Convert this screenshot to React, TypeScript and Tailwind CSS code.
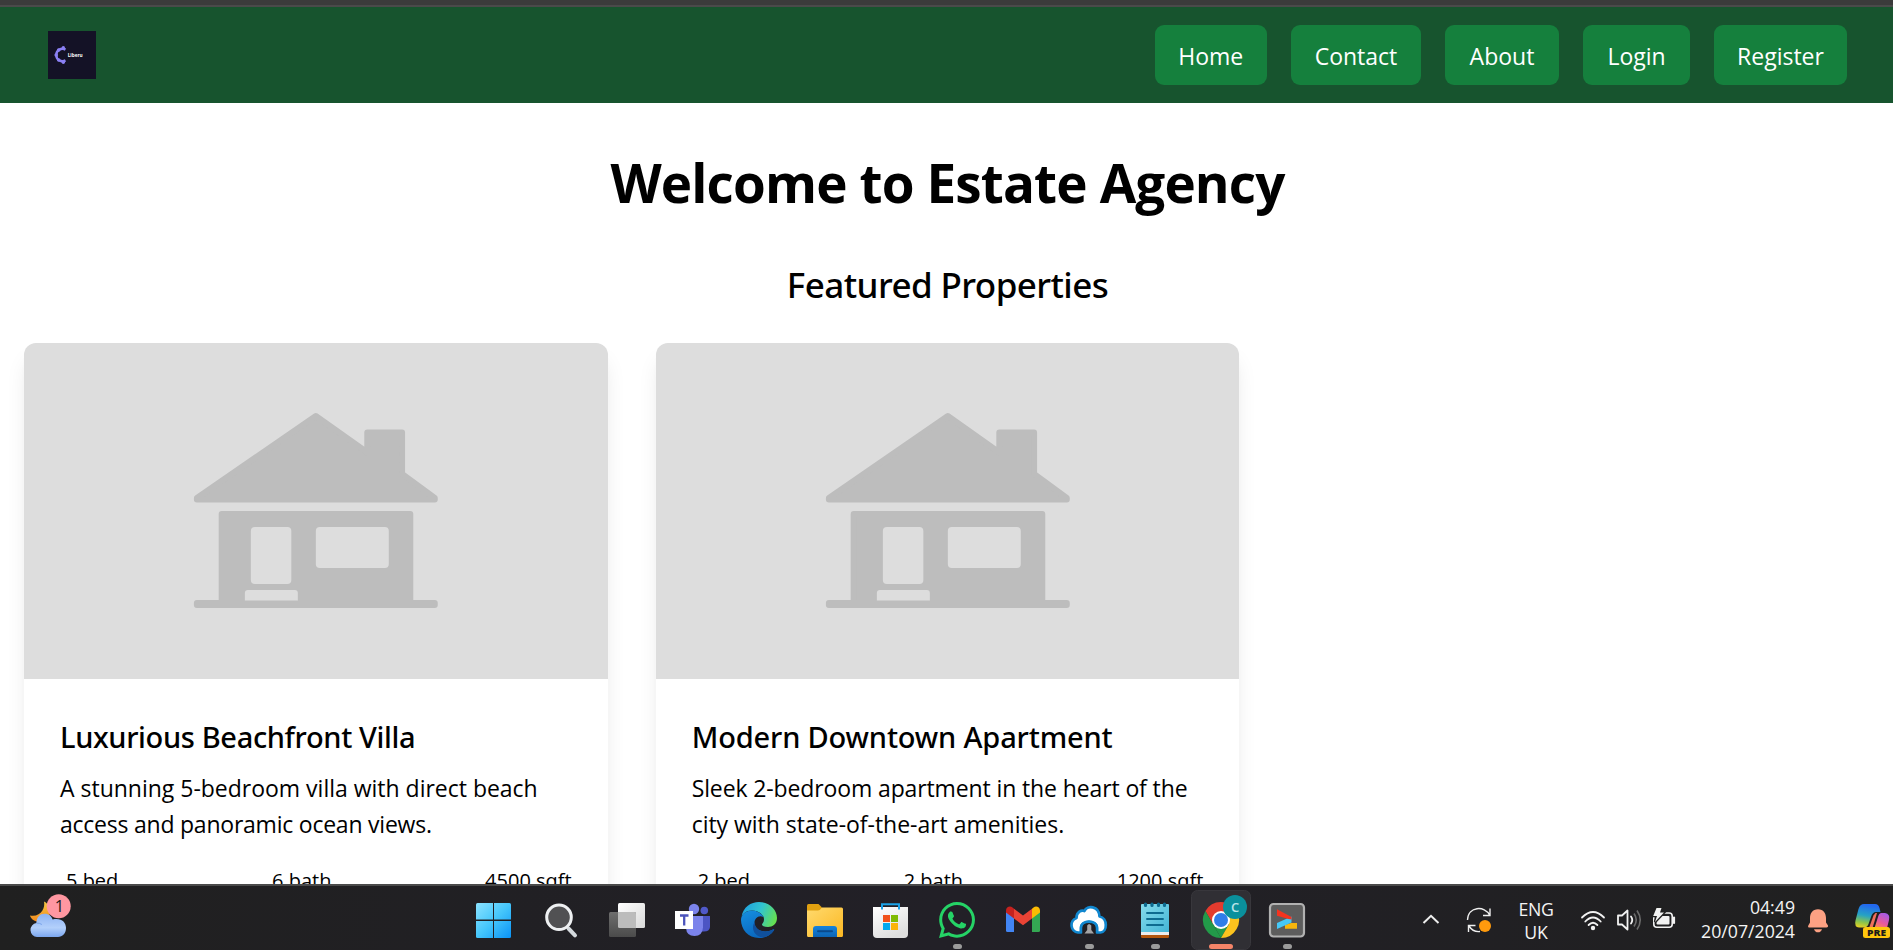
import React, { type ReactNode } from "react";
import { FaWhatsapp } from "react-icons/fa";

const navLinks = [
  { label: "Home", width: "w-[112.5px]" },
  { label: "Contact", width: "w-[130px]" },
  { label: "About", width: "w-[114px]" },
  { label: "Login", width: "w-[107px]" },
  { label: "Register", width: "w-[133px]" },
];

const properties = [
  {
    title: "Luxurious Beachfront Villa",
    titleTracking: "tracking-[-0.35px]",
    lines: [
      { text: "A stunning 5-bedroom villa with direct beach", tracking: "tracking-[-0.01px]" },
      { text: "access and panoramic ocean views.", tracking: "tracking-[-0.23px]" },
    ],
    stats: ["5 bed", "6 bath", "4500 sqft"],
  },
  {
    title: "Modern Downtown Apartment",
    titleTracking: "tracking-[-0.15px]",
    lines: [
      { text: "Sleek 2-bedroom apartment in the heart of the", tracking: "tracking-[-0.12px]" },
      { text: "city with state-of-the-art amenities.", tracking: "tracking-[-0.03px]" },
    ],
    stats: ["2 bed", "2 bath", "1200 sqft"],
  },
];

function Logo() {
  return (
    <svg className="size-12 shrink-0" viewBox="0 0 48 48">
      <rect width="48" height="48" fill="#141226" />
      <path d="M17.5 18.6A6.2 6.2 0 1 0 17.5 29.4" fill="none" stroke="#8b80f4" strokeWidth="2.4" />
      <g fill="#8b80f4">
        <circle cx="15.3" cy="16.8" r="1.7" />
        <circle cx="10.7" cy="19" r="1.8" />
        <circle cx="8.2" cy="24" r="1.8" />
        <circle cx="10.7" cy="29" r="1.8" />
        <circle cx="15.3" cy="31.3" r="1.7" />
      </g>
      <text x="19.7" y="25.8" fontSize="4.800" fontWeight="700" fill="#fff" textLength="15" lengthAdjust="spacingAndGlyphs" fontFamily="Open Sans, sans-serif">
        Liberu
      </text>
    </svg>
  );
}

function HouseImage() {
  return (
    <svg className="block h-[336px] w-full bg-[#dddddd]" viewBox="0 0 584 336" preserveAspectRatio="none">
      <g fill="#bdbdbd" stroke="#bdbdbd" strokeWidth="6" strokeLinejoin="round">
        <path d="M292 73L173 155V156.500H411V155L378.300 131V89.500H343.500V109.500Z" />
        <path d="M197.800 171H386.500V262H197.800Z" />
        <path d="M173 260H411V262H173Z" />
      </g>
      <g fill="#dddddd">
        <rect x="227" y="184" width="40.500" height="57" rx="4" />
        <rect x="292" y="184" width="73" height="41" rx="4" />
        <path d="M221 257.500V250q0-3 3-3H271q3 0 3 3V257.500Z" />
      </g>
    </svg>
  );
}

function Cell({ children }: { children: ReactNode }) {
  return (
    <svg className="h-16 w-[66px] shrink-0" viewBox="0 0 66 64">
      {children}
    </svg>
  );
}

function Running() {
  return <rect x="29" y="58" width="9" height="5" rx="2.500" fill="#9b9b9b" />;
}

function Weather() {
  return (
    <svg className="ml-6 h-16 w-12 shrink-0" viewBox="0 0 48 64">
      <defs>
        <linearGradient id="moon" x1="0" y1="0" x2="0" y2="1">
          <stop offset="0" stopColor="#f6c844" />
          <stop offset="1" stopColor="#f28a1c" />
        </linearGradient>
        <linearGradient id="cloud" x1="0" y1="0" x2="0" y2="1">
          <stop offset="0" stopColor="#8cb2f3" />
          <stop offset="0.600" stopColor="#b3d0fb" />
          <stop offset="1" stopColor="#7ba6ee" />
        </linearGradient>
      </defs>
      <path d="M20 15.500C21.500 22 17 31.500 6 29.500C8 37 20 38 25 30C28 24 25 18 20 15.500Z" fill="url(#moon)" />
      <path d="M13 51a7 7 0 0 1-.6-13.900C12.500 31 16 27.700 20.500 27.700C25 27.700 27.500 30 28.600 33.500C37 31.500 42 36 42 42C42 47.500 38.500 51 34 51Z" fill="url(#cloud)" />
      <path d="M12.400 37.100q3-.3 5.500 1.400" fill="none" stroke="#79a3ea" strokeWidth="1" />
      <circle cx="34.700" cy="20.300" r="12" fill="#ff97a1" />
      <text x="35.500" y="26.200" fontSize="16.500" textAnchor="middle" fill="#1c1c1c" fontFamily="Open Sans, sans-serif">1</text>
    </svg>
  );
}

function TaskbarApps() {
  return (
    <div className="ml-[390px] flex">
      <Cell>
        <defs>
          <linearGradient id="win" gradientUnits="userSpaceOnUse" x1="14" y1="17" x2="49" y2="52">
            <stop offset="0" stopColor="#8be3ff" />
            <stop offset="0.500" stopColor="#45c6fb" />
            <stop offset="1" stopColor="#0a93f7" />
          </linearGradient>
        </defs>
        <g fill="url(#win)">
          <path d="M15.500 17H31V33.600H14V18.500Q14 17 15.500 17Z" />
          <path d="M32 17H47.500Q49 17 49 18.500V33.600H32Z" />
          <path d="M14 35H31V52H15.500Q14 52 14 50.500Z" />
          <path d="M32 35H49V50.500Q49 52 47.500 52H32Z" />
        </g>
      </Cell>
      <Cell>
        <path d="M40.500 42.500L47 49.300" stroke="#d4d9dd" strokeWidth="4" strokeLinecap="round" />
        <circle cx="31" cy="31.300" r="12.300" fill="#515153" stroke="#eef0f2" strokeWidth="3" />
      </Cell>
      <Cell>
        <defs>
          <linearGradient id="pane" x1="0" y1="0" x2="1" y2="1">
            <stop offset="0" stopColor="#ffffff" />
            <stop offset="1" stopColor="#d9d9d9" />
          </linearGradient>
          <linearGradient id="paneBack" x1="0" y1="0" x2="0" y2="1">
            <stop offset="0" stopColor="#6e6e6e" />
            <stop offset="1" stopColor="#4b4b4b" />
          </linearGradient>
        </defs>
        <rect x="24" y="17" width="27" height="25" rx="1.500" fill="url(#pane)" />
        <rect x="15" y="26" width="27" height="25" rx="1.500" fill="url(#paneBack)" />
        <path d="M24 26H40.500Q42 26 42 27.500V42H25.500Q24 42 24 40.500Z" fill="#bcbcbc" />
      </Cell>
      <Cell>
        <circle cx="44.300" cy="24.500" r="3.800" fill="#5059c9" />
        <path d="M41 30H50V41Q49.500 45.500 44 45.500H41Z" fill="#4c55c4" />
        <circle cx="34" cy="23" r="5.200" fill="#7b83eb" />
        <path d="M26 30H43V41.500Q42.500 50 34.500 50Q26.500 50 26 42Z" fill="#7b83eb" />
        <rect x="15" y="25" width="18" height="18" fill="#fff" />
        <path d="M20 29.500H28.500M24.200 29.500V39.500" stroke="#4b53bc" strokeWidth="2.300" />
      </Cell>
      <Cell>
        <defs>
          <linearGradient id="edgeTop" x1="0" y1="0.300" x2="1" y2="0.600">
            <stop offset="0" stopColor="#1ea0e0" />
            <stop offset="0.500" stopColor="#31c4d0" />
            <stop offset="1" stopColor="#66e04f" />
          </linearGradient>
          <linearGradient id="edgeBody" x1="0" y1="0" x2="0.500" y2="1">
            <stop offset="0" stopColor="#1590e0" />
            <stop offset="1" stopColor="#0a66bd" />
          </linearGradient>
        </defs>
        <path d="M15.500 31C17 21 25 16 33 16C44 16 51 24 51 32C51 38 46.500 41 42 41C38 41 36 39.800 36 38.500C36 37.500 38 36.500 38 33.500C38 29 33 24.500 26 24.500C20 24.500 16.500 28 15.500 31Z" fill="url(#edgeTop)" />
        <path d="M15 34C15 28.500 20 24.500 26 24.500C31 24.500 36 27.500 37.500 31C32.500 28.500 28.500 32.500 28.500 36.500C28.500 43.500 37 48.500 47.500 43.300Q48.600 43 48 44.200C44.500 49.500 39 52 33 52C22 52 15 43 15 34Z" fill="url(#edgeBody)" />
        <path d="M28.500 36C24.500 43.500 29 50.500 36.500 51.600C41.500 50.700 45.500 48 48 44.200Q48.600 43 47.500 43.300C37 48.500 28.500 43.500 28.500 36Z" fill="#10509c" />
      </Cell>
      <Cell>
        <defs>
          <linearGradient id="folder" x1="0" y1="0" x2="1" y2="1">
            <stop offset="0" stopColor="#ffda6e" />
            <stop offset="1" stopColor="#fcb823" />
          </linearGradient>
          <linearGradient id="folderDock" x1="0" y1="0" x2="0" y2="1">
            <stop offset="0" stopColor="#1583dc" />
            <stop offset="1" stopColor="#0c64b4" />
          </linearGradient>
        </defs>
        <path d="M15 29V19.500Q15 18 16.500 18H26.500L30 21.500V29Z" fill="#e0a010" />
        <path d="M15 24.500H26Q28 24.500 30 21.500H49.500Q51 21.500 51 23V49.500Q51 51 49.500 51H16.500Q15 51 15 49.500Z" fill="url(#folder)" />
        <path d="M21 51V43Q21 40 24 40H42Q45 40 45 43V51Z" fill="url(#folderDock)" />
        <path d="M26 45.200H40" stroke="#0a4a8c" strokeWidth="2" strokeLinecap="round" />
      </Cell>
      <Cell>
        <defs>
          <linearGradient id="bag" x1="0" y1="0" x2="0.500" y2="1">
            <stop offset="0" stopColor="#ffffff" />
            <stop offset="1" stopColor="#dedede" />
          </linearGradient>
        </defs>
        <path d="M15 21H50V48Q50 52 46 52H19Q15 52 15 48Z" fill="url(#bag)" />
        <path d="M24 23.500V18.200H41V23.500" fill="none" stroke="#1ba2e8" strokeWidth="2" />
        <rect x="25" y="29" width="7" height="7" fill="#f1511b" />
        <rect x="33" y="29" width="7" height="7" fill="#80bb03" />
        <rect x="25" y="37" width="7" height="7" fill="#00a8f0" />
        <rect x="33" y="37" width="7" height="7" fill="#fbb40a" />
      </Cell>
      <Cell>
        <FaWhatsapp x="12.450" y="13.450" size="41.100" color="#25d366" />
        <Running />
      </Cell>
      <Cell>
        <path d="M16 25V44.500Q16 46 17.500 46H24V30Z" fill="#4285f4" />
        <path d="M42 30V46H48.500Q50 46 50 44.500V25Z" fill="#34a853" />
        <path d="M16 26.500V24.500C16 21 20 19.500 22.500 21.500L24 22.700V32.500Z" fill="#c5221f" />
        <path d="M50 26.500V24.500C50 21 46 19.500 43.500 21.500L42 22.700V32.500Z" fill="#fbbc04" />
        <path d="M24 22.700L33 29.500L42 22.700V32.500L33 39.200L24 32.500Z" fill="#ea4335" />
      </Cell>
      <Cell>
        <path d="M22 46.500A7.500 7.500 0 0 1 20.500 32C20.500 26 25.500 23.500 28.500 25C31 19 43 19.500 43.500 30.500C52 32 51.500 46 44.500 46.500H41V42C41 33.500 25 33.500 25 42V46.500Z" fill="#fff" stroke="#1187cf" strokeWidth="2.700" strokeLinejoin="round" />
        <path d="M26 47V42C26 34.800 40 34.800 40 42V47Z" fill="#1f1e23" />
        <path d="M25 47V42C25 33.800 41 33.800 41 42V47" fill="none" stroke="#1187cf" strokeWidth="2.500" />
        <path d="M31.200 44V39.500Q33 36.500 35.300 39.500V44L38 47.500H28.500Z" fill="#a4a4a6" />
        <Running />
      </Cell>
      <Cell>
        <defs>
          <linearGradient id="note" x1="0" y1="0" x2="1" y2="1">
            <stop offset="0" stopColor="#86dcec" />
            <stop offset="1" stopColor="#43b5d6" />
          </linearGradient>
        </defs>
        <rect x="19" y="44" width="28" height="8" rx="1.200" fill="#b2560d" />
        <rect x="19" y="42" width="28" height="7" fill="#ececec" />
        <path d="M19 19Q19 18 20 18H46Q47 18 47 19V46H19Z" fill="url(#note)" />
        <path d="M23.500 18V19.500M30 18V19.500M36.500 18V19.500M42.500 18V19.500" stroke="#0d6b90" strokeWidth="3.200" strokeLinecap="round" />
        <path d="M25 27H41M25 33H41M25 39H41" stroke="#0d6b90" strokeWidth="1.900" strokeLinecap="round" />
        <Running />
      </Cell>
      <Cell>
        <rect x="3.500" y="4.500" width="59" height="59" rx="6" fill="#302f34" stroke="#38373c" />
        <path d="M33 34L17.400 25A18 18 0 0 1 48.600 25Z" fill="#e33b2e" />
        <path d="M25.200 38.500L17.400 25L33 25Z" fill="#e33b2e" />
        <path d="M17.400 25L25.200 38.500L33 52A18 18 0 0 1 17.400 25Z" fill="#229a49" />
        <path d="M25.200 38.500L40.800 38.500L33 52Z" fill="#229a49" />
        <path d="M40.800 38.500L33 52A18 18 0 0 0 48.600 25L38 25Z" fill="#fcc31e" />
        <circle cx="33" cy="34" r="9" fill="#fff" />
        <circle cx="33" cy="34" r="7" fill="#2f7de9" />
        <circle cx="47" cy="21" r="12" fill="#0a909c" />
        <text x="47" y="26" fontSize="13" fontWeight="600" textAnchor="middle" fill="#b9e4e8" fontFamily="Open Sans, sans-serif">C</text>
        <rect x="21" y="58" width="24" height="5" rx="2.500" fill="#f58468" />
      </Cell>
      <Cell>
        <rect x="16" y="18" width="34" height="32.500" rx="3.500" fill="#5d5d5d" stroke="#b1b1b1" strokeWidth="2.200" />
        <path d="M31 42.800V39L37 37H43V42.800Z" fill="#f6b60c" />
        <path d="M37.500 30.500V36.500L23 43V37Z" fill="#45c8f7" />
        <path d="M23 23.300L37.500 31V33.500L34.500 33L23 29.800Z" fill="#f5331f" />
        <Running />
      </Cell>
    </div>
  );
}

function Tray() {
  return (
    <div className="ml-auto flex items-start text-[17.700px] text-[#f4f4f4]">
      <svg className="h-16 w-[110px] shrink-0" viewBox="0 0 110 64">
        <path d="M23.500 37L31 29.800L38.500 37" fill="none" stroke="#eee" strokeWidth="2" />
        <g fill="none" stroke="#eee" strokeWidth="1.400">
          <path d="M67.500 34C68 20 85 19.500 89.500 29M90 22.500V29.500H83" />
          <path d="M68.500 46V39.500H75.500M69 40C72.500 45.500 76 46 80 45.500" />
        </g>
        <circle cx="85" cy="40" r="6" fill="#ff9a0d" />
      </svg>
      <div className="flex w-[52px] flex-col items-center pt-3 leading-[23px]">
        <span className="tracking-[-0.4px]">ENG</span>
        <span>UK</span>
      </div>
      <svg className="h-16 w-[120px] shrink-0" viewBox="0 0 120 64">
        <g fill="none" stroke="#f2f2f2" strokeWidth="1.800" strokeLinecap="round">
          <path d="M20 31.500Q31 20.500 42 31.500" />
          <path d="M23.300 35.500Q31 27.500 38.700 35.500" />
          <path d="M26.600 39Q31 34.500 35.400 39" />
          <path d="M56 29.500H60L65.500 24.500V43.500L60 38.500H56Z" strokeLinejoin="round" />
          <path d="M69 30.500Q71.500 34 69 37.500" />
        </g>
        <circle cx="31" cy="42" r="2.200" fill="#f2f2f2" />
        <path d="M72 27.500Q76.500 34 72 40.500M75 24.500Q81.500 34 75 43.500" fill="none" stroke="#6b6b6b" strokeWidth="1.600" />
        <rect x="91.800" y="27" width="18.400" height="14.200" rx="3" fill="none" stroke="#f2f2f2" strokeWidth="1.600" />
        <rect x="94.500" y="30" width="13" height="8.500" rx="1" fill="#f2f2f2" />
        <path d="M94.500 22H99.500L98 26.500H102L93 36L95 30H91.200Z" fill="#f2f2f2" stroke="#202020" strokeWidth="2.600" paintOrder="stroke" />
        <path d="M112 31.500V37" stroke="#f2f2f2" strokeWidth="2.200" strokeLinecap="round" />
      </svg>
      <div className="flex w-[113px] flex-col items-end pt-[9px] leading-6">
        <span>04:49</span>
        <span>20/07/2024</span>
      </div>
      <svg className="h-16 w-[98px] shrink-0" viewBox="0 0 98 64">
        <defs>
          <linearGradient id="coA" x1="0.300" y1="0" x2="0.100" y2="1">
            <stop offset="0" stopColor="#2268ef" />
            <stop offset="0.450" stopColor="#26a3c4" />
            <stop offset="0.750" stopColor="#8cc54a" />
            <stop offset="1" stopColor="#f0d21e" />
          </linearGradient>
          <linearGradient id="coB" x1="0.700" y1="0" x2="0.200" y2="1">
            <stop offset="0" stopColor="#a45bea" />
            <stop offset="0.600" stopColor="#e85a9c" />
            <stop offset="1" stopColor="#fb8a50" />
          </linearGradient>
        </defs>
        <path d="M23 23.200C28.500 23.200 31 27.500 31 32V36.500L33 39.500Q33.500 41.500 31.500 41.500H14.500Q12.500 41.500 13.300 39.500L15 36.500V32C15 27.500 17.500 23.200 23 23.200Z" fill="#fda183" />
        <path d="M19 43.200H27Q26 46.300 23 46.300Q20 46.300 19 43.200Z" fill="#fda183" />
        <path d="M69 18H80Q83.500 18 84.500 22L85.500 26H81Q77.500 26 76 31L73.500 38Q72.500 41.500 68 41.500H64Q59 41 60.500 34.500L63.500 23Q65 18 69 18Z" fill="url(#coA)" />
        <path d="M86.500 27H90Q95.500 28 94 34L92 42H79.500L83 31Q84 27 86.500 27Z" fill="url(#coB)" />
        <path d="M78.500 29.500L80.500 27H82L77.500 42H74Z" fill="#f0705c" />
        <rect x="68" y="41" width="27" height="11" rx="2.500" fill="#ffc70d" />
        <text x="72" y="49.900" fontSize="9.300" fontWeight="800" fill="#1b1b1b" textLength="19" lengthAdjust="spacingAndGlyphs" fontFamily="Open Sans, sans-serif">PRE</text>
      </svg>
    </div>
  );
}

export default function App() {
  return (
    <div className="flex h-[950px] w-full flex-col overflow-hidden bg-white font-['Open_Sans','Noto_Sans',sans-serif] text-black">
      <div className="h-[7px] shrink-0 border-b-2 border-[#4a4a4a] bg-[#3b3b3b]" />
      <header className="flex h-24 shrink-0 items-center justify-between bg-[#17542e] pr-[46px] pl-12">
        <Logo />
        <nav className="flex gap-6">
          {navLinks.map((link) => (
            <a key={link.label} className={`${link.width} flex h-[60px] items-center justify-center rounded-[9px] bg-[#15803d] pt-0.5 text-[23px] text-white`}>
              {link.label}
            </a>
          ))}
        </nav>
      </header>

      <main className="h-[781px] shrink-0 overflow-hidden pr-[22px] pl-6">
        <h1 className="mt-[50px] text-center text-[53px] leading-[60px] font-bold tracking-[-0.86px]">Welcome to Estate Agency</h1>
        <h2 className="mt-12 text-center font-['Noto_Sans',sans-serif] text-[35px] leading-[48px] font-medium tracking-[-0.58px]">Featured Properties</h2>
        <div className="mt-[34px] grid grid-cols-3 gap-12">
          {properties.map((property) => (
            <article key={property.title} className="overflow-hidden rounded-xl bg-white shadow-[0_15px_22px_-4px_rgba(0,0,0,0.1),0_6px_9px_-6px_rgba(0,0,0,0.1)]">
              <HouseImage />
              <div className="px-9 pt-[37px] pb-9">
                <h3 className={`${property.titleTracking} font-['Noto_Sans',sans-serif] text-[29px] leading-[42px] font-medium whitespace-nowrap`}>{property.title}</h3>
                <p className="mt-3 text-[23px] leading-9">
                  {property.lines.map((line) => (
                    <span key={line.text} className={`${line.tracking} block whitespace-nowrap`}>
                      {line.text}
                    </span>
                  ))}
                </p>
                <div className="mt-6 flex justify-between pl-1.5 text-[20px] leading-[30px]">
                  {property.stats.map((stat) => (
                    <span key={stat}>{stat}</span>
                  ))}
                </div>
              </div>
            </article>
          ))}
        </div>
      </main>

      <footer className="flex h-[66px] shrink-0 border-t-2 border-[#4a4a4a] bg-linear-to-r from-[#202020] via-[#222027] to-[#202020]">
        <Weather />
        <TaskbarApps />
        <Tray />
      </footer>
    </div>
  );
}
